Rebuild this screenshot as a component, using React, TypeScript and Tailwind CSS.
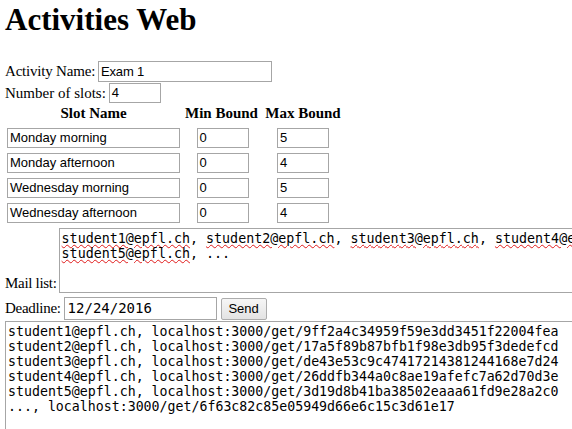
import React from "react";

const serif = "font-['Liberation_Serif',serif]";
const sans = "font-['Liberation_Sans',Arial,sans-serif]";
const mono = "font-['DejaVu_Sans_Mono',monospace]";

const inputCls = `h-[20px] border border-[#a6a6a6] bg-white px-[2px] text-[13px] leading-[18px] text-black ${sans} flex items-center`;

function Field({ value, w, h = 20 }: { value: string; w: number; h?: number }) {
  return (
    <div className={inputCls} style={{ width: w, height: h }}>
      {value}
    </div>
  );
}

const slots = [
  ["Monday morning", "0", "5"],
  ["Monday afternoon", "0", "4"],
  ["Wednesday morning", "0", "5"],
  ["Wednesday afternoon", "0", "4"],
];

const results = [
  "student1@epfl.ch, localhost:3000/get/9ff2a4c34959f59e3dd3451f22004fea",
  "student2@epfl.ch, localhost:3000/get/17a5f89b87bfb1f98e3db95f3dedefcd",
  "student3@epfl.ch, localhost:3000/get/de43e53c9c47417214381244168e7d24",
  "student4@epfl.ch, localhost:3000/get/26ddfb344a0c8ae19afefc7a62d70d3e",
  "student5@epfl.ch, localhost:3000/get/3d19d8b41ba38502eaaa61fd9e28a2c0",
  "..., localhost:3000/get/6f63c82c85e05949d66e6c15c3d61e17",
];

function Sp({ children }: { children: React.ReactNode }) {
  return (
    <span className="underline decoration-wavy decoration-[#e01b1b] decoration-1 underline-offset-[1px]">
      {children}
    </span>
  );
}

export default function App() {
  return (
    <div className={`w-[572px] h-[429px] overflow-hidden bg-white text-black ${serif}`}>
      <div className="pl-[5px]">
        <h1 className="mt-[2px] text-[31px] leading-[36px] font-bold">Activities Web</h1>

        <div className="mt-[23px] flex h-[21px] items-center gap-[3px] text-[15px] leading-[17px] tracking-[-0.2px]">
          <span className="whitespace-nowrap">Activity Name:</span>
          <Field value="Exam 1" w={174} h={21} />
        </div>
        <div className="mt-[1px] flex h-[20px] items-center gap-[3px] text-[15px] leading-[17px]">
          <span className="whitespace-nowrap">Number of slots:</span>
          <Field value="4" w={52} />
        </div>

        <div className="grid grid-cols-[177px_79px_84px] text-[15px] leading-[17px]">
          <div className="pt-[2px] text-center font-bold">Slot Name</div>
          <div className="pt-[2px] text-center font-bold">Min Bound</div>
          <div className="pt-[2px] text-center font-bold">Max Bound</div>
        </div>
        <div className="mt-[6px] flex flex-col gap-[5px]">
          {slots.map(([n, a, b]) => (
            <div key={n} className="grid grid-cols-[177px_79px_84px]">
              <div className="pl-[2px]">
                <Field value={n} w={173} />
              </div>
              <div className="flex justify-center pl-[2px]">
                <Field value={a} w={52} />
              </div>
              <div className="flex justify-center">
                <Field value={b} w={52} />
              </div>
            </div>
          ))}
        </div>

        <div className="mt-[5px] flex items-end gap-[2px] text-[15px] leading-[17px]">
          <span className="shrink-0 whitespace-nowrap pb-[1px] tracking-[-0.3px]">Mail list:</span>
          <div
            className={`h-[65px] w-[640px] shrink-0 border border-[#a6a6a6] bg-white px-[2px] pt-[2px] text-[13.33px] leading-[15px] whitespace-pre ${mono}`}
          >
            <Sp>student1@epfl.ch</Sp>, <Sp>student2@epfl.ch</Sp>, <Sp>student3@epfl.ch</Sp>, <Sp>student4@epfl.ch</Sp>,
            {"\n"}
            <Sp>student5@epfl.ch</Sp>, ...
          </div>
        </div>

        <div className="mt-[4px] flex h-[23px] items-center text-[15px] leading-[17px]">
          <span className="whitespace-nowrap tracking-[-0.3px]">Deadline:</span>
          <div
            className={`ml-[3px] flex h-[23px] w-[153px] items-center border border-[#a6a6a6] bg-white pl-[3px] text-[14px] ${mono}`}
          >
            12/24/2016
          </div>
          <button
            className={`ml-[4px] flex h-[22px] w-[46px] items-center justify-center rounded-[2px] border border-[#acacac] bg-gradient-to-b from-[#f6f6f6] to-[#e3e3e3] text-[13px] text-black ${sans}`}
          >
            Send
          </button>
        </div>

        <div
          className={`mt-[1px] h-[130px] w-[640px] border border-[#a6a6a6] bg-white px-[2px] pt-[2px] text-[13.25px] leading-[15px] whitespace-pre ${mono}`}
        >
          {results.join("\n")}
        </div>
      </div>
    </div>
  );
}
